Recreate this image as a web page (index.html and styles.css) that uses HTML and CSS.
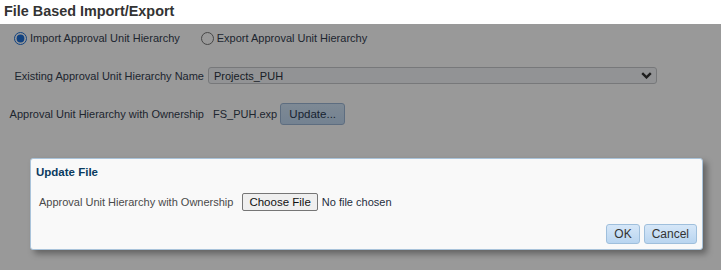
FILE: index.html
```html
<!DOCTYPE html>
<html lang="en">
<head>
  <meta charset="UTF-8" />
  <title>File Based Import/Export</title>
  <link rel="stylesheet" href="styles.css">
</head>
<body>
  <h1 class="page-title">File Based Import/Export</h1>

  <div class="content">
    <div class="radio-row">
      <label class="radio-item"><input type="radio" name="mode" checked> Import Approval Unit Hierarchy</label>
      <label class="radio-item"><input type="radio" name="mode"> Export Approval Unit Hierarchy</label>
    </div>

    <div class="form-grid">
      <label class="form-label" for="puh">Existing Approval Unit Hierarchy Name</label>
      <div class="select-wrap">
        <select id="puh" class="select-box">
          <option>Projects_PUH</option>
        </select>
        <svg class="chevron" width="11" height="7" viewBox="0 0 11 7">
          <path d="M1.2 1.2 L5.5 5.4 L9.8 1.2" fill="none" stroke="#333" stroke-width="2.4"/>
        </svg>
      </div>

      <span class="form-label">Approval Unit Hierarchy with Ownership</span>
      <div class="file-field">
        <span class="file-name">FS_PUH.exp</span>
        <button class="btn-update">Update...</button>
      </div>
    </div>

    <div class="overlay"></div>

    <div class="dialog">
      <div class="dialog-title">Update File</div>
      <div class="dialog-row">
        <label class="dialog-label" for="upload">Approval Unit Hierarchy with Ownership</label>
        <input id="upload" class="file-input" type="file">
      </div>
      <div class="dialog-footer">
        <button class="btn-dlg">OK</button>
        <button class="btn-dlg">Cancel</button>
      </div>
    </div>
  </div>
</body>
</html>
```

FILE: styles.css
```css
* {
    box-sizing: border-box;
    margin: 0;
    padding: 0;
}

body {
    font-family: 'Liberation Sans', Arial, sans-serif;
    font-size: 11px;
    color: #34404f;
    background: white;
    width: 721px;
    height: 270px;
    overflow: hidden;
}

.page-title {
    font-size: 14.4px;
    font-weight: bold;
    color: #333;
    height: 24px;
    line-height: 22px;
    padding-left: 4px;
}

.content {
    position: relative;
    height: 246px;
    padding-top: 5px;
}

.radio-row {
    display: flex;
    height: 18px;
    align-items: center;
    padding-left: 14px;
    gap: 21px;
}

.radio-item {
    display: flex;
    align-items: center;
    gap: 3px;
}

.radio-item input {
    width: 13px;
    height: 13px;
    margin: 0;
    accent-color: #1d6fd6;
}

.form-grid {
    display: grid;
    grid-template-columns: 200px auto;
    grid-template-rows: 17px 22px;
    column-gap: 4px;
    row-gap: 19px;
    padding-left: 4px;
    margin-top: 20px;
}

.form-label {
    text-align: right;
    align-self: center;
}

.select-wrap {
    position: relative;
    width: 449px;
    height: 17px;
}

.select-box {
    appearance: none;
    width: 100%;
    height: 100%;
    font-family: 'Liberation Sans', Arial, sans-serif;
    font-size: 11px;
    color: #2c3440;
    background: #f4f6f9;
    border: 1px solid #c6c8cc;
    border-radius: 3px;
    padding-left: 5px;
}

.chevron {
    position: absolute;
    right: 5px;
    top: 5px;
}

.file-field {
    display: flex;
    align-items: center;
    gap: 3px;
    padding-left: 5px;
}

.btn-update {
    width: 65px;
    height: 22px;
    font-family: 'Liberation Sans', Arial, sans-serif;
    font-size: 11.5px;
    color: #2a3a52;
    background: linear-gradient(#d2e5f8, #c1d9f2);
    border: 1px solid #9cb6d6;
    border-radius: 3px;
}

.overlay {
    position: absolute;
    top: 0;
    left: 0;
    right: 0;
    bottom: 0;
    background: rgba(0, 0, 0, 0.4);
}

.dialog {
    position: absolute;
    left: 30px;
    top: 134px;
    width: 673px;
    height: 92px;
    background: #f9f9f9;
    border: 1px solid #a9c3da;
    border-radius: 3px;
    box-shadow: 4px 4px 6px rgba(0, 0, 0, 0.35);
    padding: 7px 5px 5px 5px;
}

.dialog-title {
    font-size: 11.5px;
    font-weight: bold;
    color: #0b3b5f;
    height: 13px;
    line-height: 13px;
}

.dialog-row {
    display: flex;
    align-items: center;
    height: 18px;
    margin-top: 14px;
    padding-left: 3px;
    gap: 9px;
}

.dialog-label {
    color: #4a4a4a;
}

.file-input {
    font-family: 'Liberation Sans', Arial, sans-serif;
    font-size: 11px;
    color: #1f2d3d;
}

.file-input::file-selector-button {
    font-family: 'Liberation Sans', Arial, sans-serif;
    font-size: 11.5px;
    color: #111;
    height: 18px;
    padding: 0 6px;
    margin-right: 4px;
    background: #efefef;
    border: 1px solid #767676;
    border-radius: 2px;
}

.dialog-footer {
    display: flex;
    justify-content: flex-end;
    gap: 4px;
    margin-top: 13px;
}

.btn-dlg {
    height: 20px;
    padding: 0 7px;
    font-family: 'Liberation Sans', Arial, sans-serif;
    font-size: 12px;
    color: #333;
    background: linear-gradient(#d6e7f8, #b9d5f0);
    border: 1px solid #9fbfdc;
    border-radius: 3px;
}
```
